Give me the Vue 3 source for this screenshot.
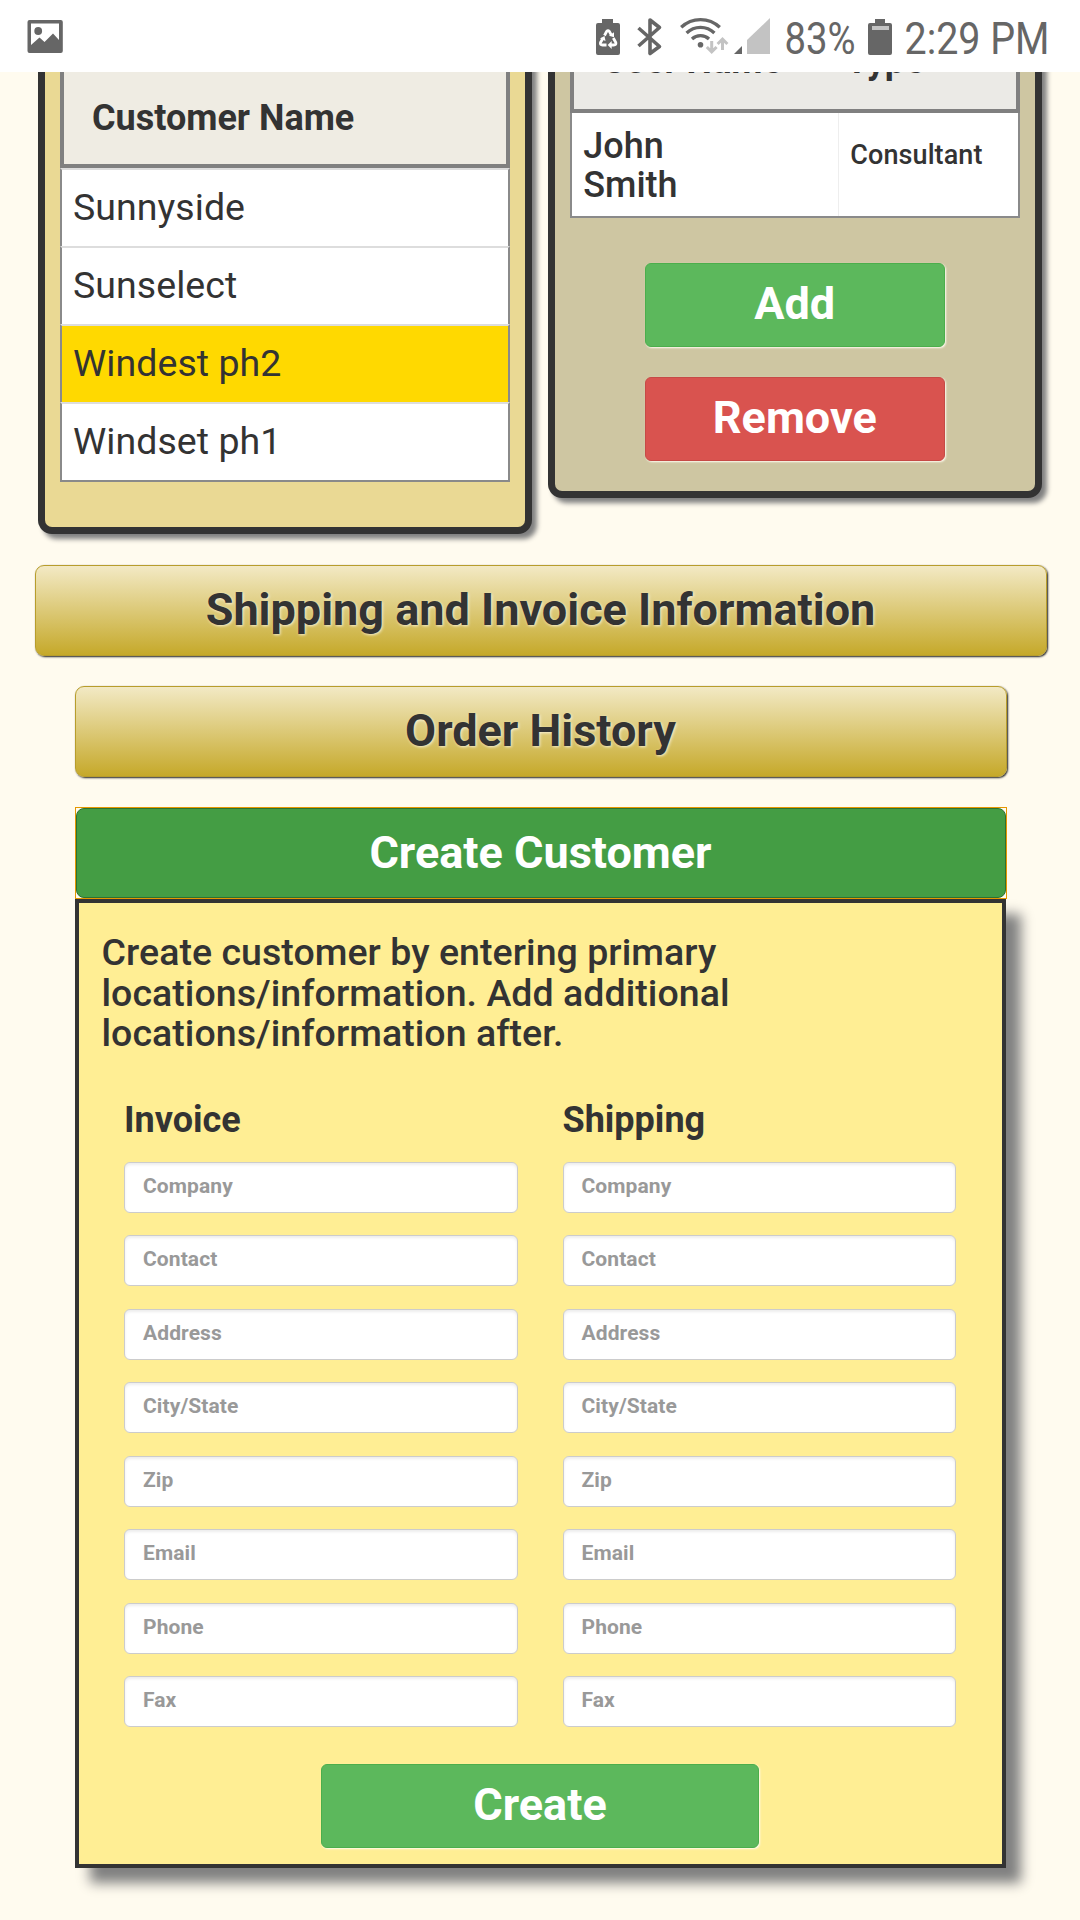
<script setup>
const customers = [
  { name: 'Sunnyside' },
  { name: 'Sunselect' },
  { name: 'Windest ph2', selected: true },
  { name: 'Windset ph1' },
]
const groups = ['Invoice', 'Shipping']
const fields = ['Company', 'Contact', 'Address', 'City/State', 'Zip', 'Email', 'Phone', 'Fax']
</script>

<template>
  <div class="page">
    <header class="status">
      <svg class="photo" width="36" height="34" viewBox="27 20 36 34">
        <path fill="#666" fill-rule="evenodd" d="M29.5 20h31.300a2 2 0 0 1 2 2v29a2 2 0 0 1-2 2H29.500a2 2 0 0 1-2-2V22a2 2 0 0 1 2-2zM31 23.500V45l8.500-7.500 5 4.500 8.500-8.500 6 6.500V23.500z" />
        <circle cx="38.200" cy="31" r="3.900" fill="#666" />
      </svg>
      <svg width="180" height="44" viewBox="592 15 180 44">
        <path fill="#666" d="M602 19h11v4h5a2 2 0 0 1 2 2v28a2 2 0 0 1-2 2h-20a2 2 0 0 1-2-2V25a2 2 0 0 1 2-2h4z" />
        <g fill="none" stroke="#fff" stroke-width="2.800">
          <path d="M604.500 35.500l2.200-4.200q1.300-1.500 2.600 0l2.200 4" />
          <path d="M613.300 38l2.500 4.500q.6 2.500-2 2.500h-3.500" />
          <path d="M606.500 45h-4q-2.600 0-2-2.500l2.500-4.200" />
        </g>
        <g fill="#fff">
          <path d="M614 32.300v5l-5-1.500z" />
          <path d="M611.700 41v8l-4-4z" />
          <path d="M600 38.500l4.500-2.500 1 5z" />
        </g>
        <path fill="none" stroke="#666" stroke-width="3.600" stroke-linejoin="round" d="M638.500 28l21 18.500-9.500 7V20l9.500 7.500-21 18.500" />
        <g fill="none" stroke="#666" stroke-width="3.300">
          <path d="M681.200 27.300a28 28 0 0 1 38.600 0" />
          <path d="M686.600 33a20 20 0 0 1 27.800 0" />
          <path d="M692 39a12.500 12.500 0 0 1 17 0" />
        </g>
        <circle cx="700.500" cy="44.700" r="2.800" fill="#666" />
        <g fill="none" stroke="#c3c3c3" stroke-width="3">
          <path d="M711.700 41v10.500M706.800 47l4.900 4.900 4.900-4.900" />
          <path d="M722.500 50V39.500M717.600 44l4.900-4.900 4.900 4.900" />
        </g>
        <path fill="#666" d="M742 46v8h-8z" />
        <path fill="#c3c3c3" d="M770 18v36h-23V40z" />
      </svg>
      <svg width="290" height="44" viewBox="772 15 290 44">
        <text x="784.500" y="54" textLength="71" lengthAdjust="spacingAndGlyphs">83%</text>
        <path fill="#666" d="M875 19h10v4h5a2 2 0 0 1 2 2v28a2 2 0 0 1-2 2h-20a2 2 0 0 1-2-2V25a2 2 0 0 1 2-2h5z" />
        <path fill="#c3c3c3" d="M872 26h17v4h-17z" />
        <text x="904.500" y="54" textLength="145" lengthAdjust="spacingAndGlyphs">2:29 PM</text>
      </svg>
    </header>

    <main>
      <div class="panels">
        <section class="panel customers">
          <div class="table">
            <div class="thead"><span>Customer Name</span></div>
            <div v-for="c in customers" :key="c.name" class="row" :class="{ selected: c.selected }">{{ c.name }}</div>
          </div>
        </section>
        <section class="panel users">
          <div class="table">
            <div class="thead"><span class="c1">User Name</span><span>Type</span></div>
            <div class="user">
              <div class="uname">John<br />Smith</div>
              <div class="utype">Consultant</div>
            </div>
          </div>
          <button class="btn green">Add</button>
          <button class="btn red">Remove</button>
        </section>
      </div>

      <button class="gold wide">Shipping and Invoice Information</button>
      <button class="gold">Order History</button>
      <div class="focus"><button class="head">Create Customer</button></div>

      <section class="create">
        <p>Create customer by entering primary locations/information. Add additional locations/information after.</p>
        <div class="cols">
          <div v-for="g in groups" :key="g" class="col">
            <h3>{{ g }}</h3>
            <div v-for="f in fields" :key="f" class="field">{{ f }}</div>
          </div>
        </div>
        <button class="btn green submit">Create</button>
      </section>
    </main>
  </div>
</template>

<style>
body { margin: 0; background: #fffbef; }
</style>

<style scoped>
* { box-sizing: border-box; }
.page {
  width: 1080px;
  height: 1920px;
  overflow: hidden;
  background: #fffbef;
  color: #333;
  font-family: Roboto, "Liberation Sans", sans-serif;
}
.status {
  height: 72px;
  display: flex;
  align-items: flex-start;
  padding: 15px 0 0 27px;
  background: #fff;
}
.status svg { display: block; flex: none; }
.photo { margin: 5px 529px 0 0; }
.status text { font-size: 45px; fill: #666; }
main {
  height: 1848px;
  overflow: hidden;
  display: flex;
  flex-direction: column;
  align-items: flex-start;
}
.panels {
  display: flex;
  align-items: flex-start;
  gap: 15.500px;
  height: 513px;
  margin-top: -20px;
  padding-left: 37.500px;
  flex: none;
}
.panel {
  width: 494.500px;
  border: 7.500px solid #333;
  border-top: 0;
  border-radius: 0 0 14px 14px;
  padding: 20px 15px 0;
  box-shadow: 5px 5px 5px gray;
}
.customers { height: 482px; background: #ead994; }
.users {
  height: 446px;
  background: #cec6a2;
  display: flex;
  flex-direction: column;
  align-items: center;
}
.table { width: 450px; flex: none; }
.thead {
  display: flex;
  height: 96px;
  padding: 26px 0 0 28.500px;
  border: 4px solid gray;
  border-top: 0;
  background: #efece3;
  font-size: 36px;
  font-weight: 700;
  line-height: 40px;
}
.users .thead { height: 41px; padding: 0 0 0 29px; background: #ebeae6; }
.users .thead span { margin-top: -31px; }
.users .c1 { width: 243px; }
.row {
  height: 78px;
  padding-left: 11.500px;
  border: 2px solid #8a8a8a;
  border-top-color: #ddd;
  border-bottom: 0;
  background: #fff;
  font-size: 37.500px;
  letter-spacing: .05px;
  line-height: 74px;
}
.row:last-child { height: 80px; border-bottom: 2px solid #8a8a8a; }
.selected { background: #ffd900; }
.user {
  display: flex;
  height: 105px;
  border: 2px solid #8a8a8a;
  border-top: 0;
  background: #fff;
  font-weight: 500;
  line-height: 39px;
}
.uname { width: 267px; padding: 14px 0 0 11.500px; border-right: 1px solid #eee; font-size: 36px; }
.utype { padding: 23px 0 0 11.500px; font-size: 27px; letter-spacing: .1px; }
button { font-family: inherit; display: block; flex: none; }
.btn {
  width: 300px;
  height: 84px;
  border: 1.500px solid #4cae4c;
  border-radius: 6px;
  padding: 0 0 3px;
  background: #5cb85c;
  color: #fff;
  font-size: 45px;
  font-weight: 700;
  box-shadow: 1px 1px 2px #fffbef;
}
.users .btn { margin-top: 45px; }
.users .red { margin-top: 30px; border-color: #c64a46; background: #d9534f; }
.gold {
  width: 932px;
  height: 91px;
  margin: 0 0 30px 74.500px;
  border: 1.500px solid #b89d2c;
  border-radius: 9px;
  padding: 0 0 2px;
  background: linear-gradient(#f3eac6, #c5a828) border-box;
  color: #333;
  font-size: 45px;
  font-weight: 700;
  text-shadow: 1px 1px 3px rgba(255, 251, 239, .8);
  box-shadow: 1px 1px 2px #222;
}
.wide { width: 1012px; margin-left: 34.500px; }
.focus {
  width: 932px;
  height: 92px;
  margin-left: 74.500px;
  border: 1px solid #e59700;
  background: #fffbef;
  flex: none;
}
.head {
  width: 100%;
  height: 90px;
  border: 1.500px solid #2f7030;
  border-radius: 8px;
  padding: 0 0 2px;
  background: #449d44;
  color: #fff;
  font-size: 45px;
  font-weight: 700;
}
.create {
  width: 931px;
  height: 969px;
  margin-left: 75px;
  border: 4px solid #333;
  padding: 29px 22px 0 22.500px;
  background: #ffee94;
  box-shadow: 15px 15px 12px gray;
  flex: none;
}
p { width: 660px; margin: 0; font-size: 37.500px; font-weight: 500; letter-spacing: .05px; line-height: 40.500px; }
.cols { display: flex; gap: 45px; padding-left: 22.500px; margin-top: 46px; }
.col { width: 393.500px; }
h3 { margin: 0 0 22px; font-size: 36px; line-height: 40px; font-weight: 700; }
.field {
  height: 51px;
  margin-bottom: 22.500px;
  border: 1.500px solid #ccc;
  border-radius: 6px;
  padding-left: 18px;
  background: #fff;
  box-shadow: inset 0 2px 3px rgba(0, 0, 0, .075);
  color: #999;
  font-size: 21px;
  font-weight: 700;
  letter-spacing: .1px;
  line-height: 47px;
}
.submit { width: 438px; margin: 14.500px 0 0 219.500px; }
</style>
